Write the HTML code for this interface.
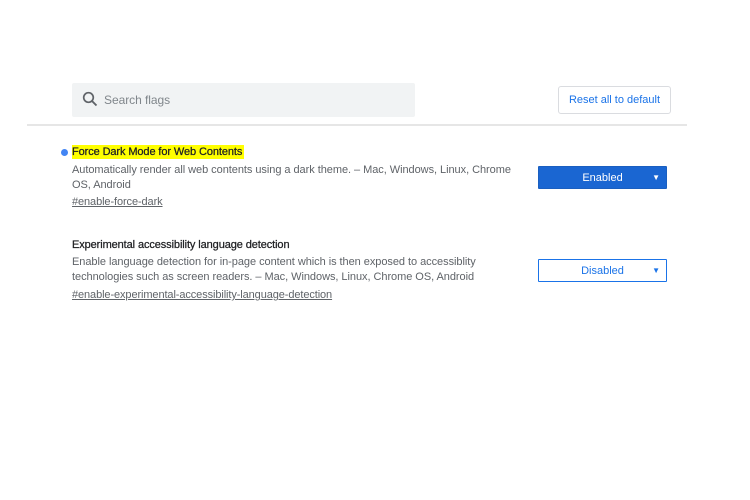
<!DOCTYPE html>
<html><head><meta charset="utf-8"><style>
body{margin:0;width:750px;height:500px;background:#fff;font-family:"Liberation Sans",Arial,sans-serif;position:relative;overflow:hidden;color:#5f6368}
.a{position:absolute;white-space:nowrap}
.search{left:72px;top:83px;width:343px;height:34px;background:#f1f3f4;border-radius:2px}
.reset{left:558px;top:86px;width:111px;height:26px;border:1px solid #dadce0;border-radius:3px;color:#1a73e8;font-size:11px;line-height:27px;text-align:center}
.line{left:27px;top:124px;width:660px;height:2px;background:#e6e6e6}
.t{font-size:11px;color:#202124;letter-spacing:-0.1px;-webkit-text-stroke:0.25px #202124}
.d{font-size:11px;color:#5f6368;letter-spacing:-0.05px}
.l{font-size:11px;color:#5f6368;text-decoration:underline;letter-spacing:-0.1px}
.sel{left:538px;width:127px;height:21px;font-size:11px;line-height:22px;text-align:center;border-radius:1px}
</style></head><body>
<div class="a search"></div>
<svg class="a" style="left:82px;top:91px" width="16" height="16" viewBox="0 0 16 16"><circle cx="6.5" cy="6.5" r="4.8" fill="none" stroke="#5f6368" stroke-width="1.7"/><path d="M10 10l4.5 4.5" stroke="#5f6368" stroke-width="1.9"/></svg>
<div class="a d" style="left:104px;top:93px;font-size:12px;color:#80868b">Search flags</div>
<div class="a reset">Reset all to default</div>
<div class="a line"></div>
<div class="a" style="left:61px;top:149px;width:7px;height:7px;border-radius:50%;background:#4285f4"></div>
<div class="a" style="left:72px;top:145px;width:172px;height:14px;background:#ffff00"></div>
<div class="a t" style="left:72px;top:146px">Force Dark Mode for Web Contents</div>
<div class="a d" style="left:72px;top:164px">Automatically render all web contents using a dark theme. – Mac, Windows, Linux, Chrome</div>
<div class="a d" style="left:72px;top:179px">OS, Android</div>
<div class="a l" style="left:72px;top:196px">#enable-force-dark</div>
<div class="a sel" style="top:166px;background:#1a66d2;color:#fff;border:1px solid #1a5fc0">Enabled<span style="position:absolute;right:6px;font-size:8px">▼</span></div>
<div class="a t" style="left:72px;top:239px">Experimental accessibility language detection</div>
<div class="a d" style="left:72px;top:256px">Enable language detection for in-page content which is then exposed to accessiblity</div>
<div class="a d" style="left:72px;top:271px">technologies such as screen readers. – Mac, Windows, Linux, Chrome OS, Android</div>
<div class="a l" style="left:72px;top:289px">#enable-experimental-accessibility-language-detection</div>
<div class="a sel" style="top:259px;background:#fff;color:#1a73e8;border:1px solid #1a73e8">Disabled<span style="position:absolute;right:6px;font-size:8px">▼</span></div>
</body></html>
